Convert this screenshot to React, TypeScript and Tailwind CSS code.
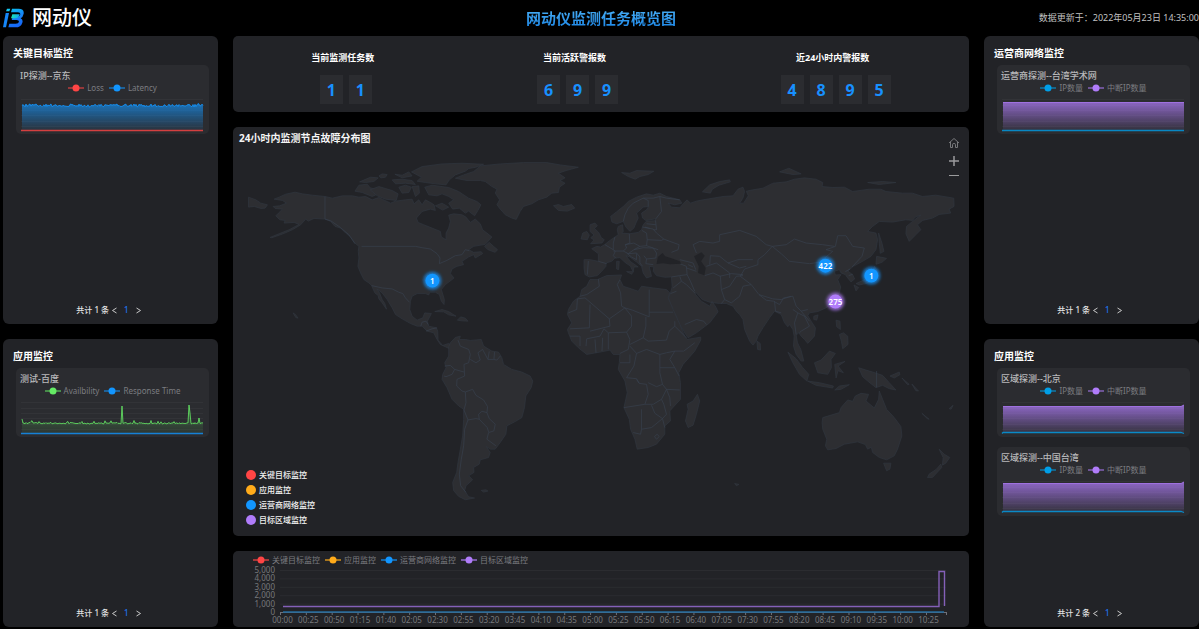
import { useId, type ReactNode } from "react";

const RED = "#ff4545";
const ORANGE = "#ffab1a";
const BLUE = "#1296ff";
const SKY = "#009fe8";
const PURPLE = "#b07cfa";
const GREEN = "#65eb65";

interface Series {
  name: string;
  color: string;
}

interface CardData {
  title: string;
  legend: Series[];
  chart: ReactNode;
}

const MONITORS: Series[] = [
  { name: "关键目标监控", color: RED },
  { name: "应用监控", color: ORANGE },
  { name: "运营商网络监控", color: BLUE },
  { name: "目标区域监控", color: PURPLE },
];

const IP_LEGEND: Series[] = [
  { name: "IP数量", color: SKY },
  { name: "中断IP数量", color: PURPLE },
];

const STATS = [
  { label: "当前监测任务数", value: "11" },
  { label: "当前活跃警报数", value: "699" },
  { label: "近24小时内警报数", value: "4895" },
];

// Land outlines, one drawing unit is a third of a pixel
const AMERICAS = [
  "M115 148L140 152 152 160 132 168 112 170 118 176 140 178 128 190 120 198 132 210 148 212 145 220 175 218 190 224 160 240 130 252 103 263 108 264 140 253 170 240 195 225 210 208 218 214 235 206 268 208 285 215 298 230 315 235 330 250 345 262 358 280 370 290 368 305 370 325 367 350 375 370 385 390 400 400 408 408 418 430 428 438 430 448 440 460 453 479 448 462 440 450 432 430 424 418 440 430 455 450 470 475 480 495 500 508 525 522 545 530 560 530 575 545 595 550 605 570 615 585 630 592 645 599 655 592 640 582 622 588 608 572 607 545 603 535 580 530 576 515 588 492 568 490 562 505 545 512 530 500 523 480 525 455 530 440 545 432 570 432 580 436 583 428 600 428 612 435 618 455 626 465 627 450 618 420 630 405 650 390 656 385 645 372 650 358 665 350 685 345 680 335 700 322 715 315 720 325 742 312 738 306 715 308 700 300 715 290 750 284 770 262 755 250 742 240 735 222 720 208 705 218 692 202 680 195 655 192 640 196 645 215 640 235 632 250 632 270 618 262 615 245 590 235 565 225 548 218 543 205 560 185 585 178 600 182 596 165 585 158 570 150 560 165 550 150 536 162 530 148 510 150 480 154 465 160 440 148 430 143 410 150 390 140 370 142 350 138 320 138 290 145 268 140 230 136 200 132 178 127 150 133 130 142Z",
  "M748 290L762 278 775 290 787 300 780 308 758 300Z",
  "M358 124L370 106 395 103 404 114 420 118 432 130 410 140 380 128Z",
  "M404 120L430 110 450 116 470 122 488 132 482 152 450 148 425 138Z",
  "M528 66L560 50 620 42 680 40 745 43 722 52 700 56 690 64 660 75 642 90 632 105 600 102 570 98 545 94 558 82Z",
  "M568 112L590 106 640 113 670 125 700 145 725 155 737 165 728 182 718 198 700 184 690 190 672 175 652 178 640 160 655 150 640 140 620 132 605 138 580 135Z",
  "M372 96L405 82 428 84 415 95 390 98Z",
  "M430 78L440 72 455 74 450 82 436 84Z",
  "M478 73L500 76 520 66 530 78 500 84Z",
  "M470 90L500 88 530 92 540 104 510 100 480 102Z",
  "M490 112L510 106 528 112 520 128 500 130Z",
  "M530 110L550 108 552 130 540 140Z",
  "M600 168L620 160 640 172 622 181Z",
  "M38 142L60 150 75 160 95 165 88 175 75 176 55 170 38 172Z",
  "M598 486L620 480 640 486 662 500 640 496 625 487Z",
  "M666 512L676 502 690 506 698 515 680 514Z",
  "M172 490L180 496 187 506 180 504Z",
  // south america
  "M640 592L645 580 660 564 675 560 672 570 690 570 705 573 738 570 745 590 770 605 790 608 800 625 805 645 830 660 860 668 885 680 893 695 888 715 872 740 868 775 860 805 840 817 815 830 812 855 795 880 780 900 765 900 753 892 765 910 760 925 735 932 732 945 715 955 716 970 700 980 712 992 692 1010 688 1025 700 1043 718 1047 690 1052 670 1042 655 1025 652 1000 664 970 668 940 675 900 682 860 685 810 685 780 670 770 650 750 635 715 620 690 622 675 632 655 628 640 640 620Z",
  "M738 1024L752 1022 758 1026 745 1029Z",
];

const AMERICAS_BORDERS = [
  "M268 140L268 208 285 213 310 230 340 255 358 282",
  "M378 290L540 290 560 294 585 298 605 312 614 325 612 342 635 332 660 318 680 315 690 300 702 303",
  "M408 408L440 415 470 418 490 428 502 432 510 445 522 458",
  "M556 530L560 518 572 515 578 525M572 545L590 538 605 535",
  "M668 572L675 590 700 600 705 615 700 640 686 645 688 680 665 690 664 710 680 725 690 728 712 720 722 738 745 752 757 772 755 790",
  "M628 650L645 648 658 660 650 675 632 682 626 680M658 660L686 668",
  "M690 728L692 760 686 782 698 812 722 808 732 810 730 795 740 786 755 790 762 808 780 825 776 845 760 850 755 870 782 890M732 810L756 835 760 848",
  "M698 812L688 840 685 890 678 930 672 975 676 1010 692 1030",
  "M705 630L722 640 735 632 728 610 742 600 758 630 775 630 785 632 795 620M762 606L758 630M778 608L776 630",
];

const OLD_WORLD = [
  // greenland, iceland, svalbard
  "M0 48L60 42 130 38 200 38 240 45 295 52 258 62 235 70 255 84 240 92 255 100 238 112 235 128 215 130 200 142 175 150 155 162 130 170 120 185 108 209 95 205 75 195 60 178 50 165 58 150 45 130 50 118 35 110 15 95 0 92 -40 92 -75 85 -50 75 -20 65Z",
  "M220 168L235 164 250 170 275 164 284 175 262 184 235 182Z",
  "M425 68L450 70 470 62 522 64 505 74 480 80 466 88 445 80Z",
  // eurasia
  "M312 330L330 330 355 335 355 312 335 297 350 290 362 292 375 284 390 272 405 262 415 255 412 240 415 230 428 225 430 245 425 250 450 252 475 248 485 240 490 225 500 214 525 213 528 207 498 212 488 205 485 190 500 180 506 170 490 172 470 190 475 205 468 220 462 235 450 245 438 232 430 215 410 222 396 217 392 200 410 186 430 170 445 155 470 142 500 132 520 136 540 130 560 140 600 150 606 160 585 165 565 160 575 172 600 174 612 160 622 150 632 160 650 154 670 150 700 145 730 140 760 138 775 118 790 112 795 125 790 145 780 160 792 160 806 138 800 124 820 120 850 115 880 100 920 96 945 88 975 84 1010 88 1030 98 1028 110 1060 113 1095 112 1120 125 1170 118 1205 118 1220 125 1270 130 1300 130 1330 140 1370 136 1424 145 1425 170 1410 178 1415 190 1380 194 1360 205 1330 212 1315 225 1325 240 1310 255 1290 275 1280 252 1282 230 1300 215 1325 196 1308 202 1300 212 1280 210 1240 217 1200 215 1180 230 1165 245 1190 250 1195 270 1190 300 1175 320 1150 335 1122 350 1105 364 1120 375 1126 388 1115 397 1105 385 1098 375 1085 370 1080 360 1065 365 1068 376 1085 375 1075 390 1084 412 1080 430 1065 455 1040 475 1015 486 990 490 985 498 995 515 1008 535 1005 560 985 582 975 570 965 560 958 550 950 557 954 580 964 600 973 635 965 635 950 615 942 590 944 560 940 540 930 525 925 532 915 520 905 495 885 485 870 505 850 535 835 560 830 575 820 587 810 575 795 540 790 510 780 495 770 485 760 470 740 462 720 462 690 458 668 450 650 430 645 432 665 455 690 470 697 455 710 475 715 487 690 520 650 550 625 565 618 555 600 525 580 480 565 445 572 430 577 412 575 382 555 383 530 378 520 365 522 352 508 350 515 380 500 385 490 370 485 350 470 337 450 322 438 318 452 336 475 352 462 352 460 368 452 350 435 338 420 324 405 325 395 335 378 340 378 350 365 365 352 378 328 382 315 375 312 355Z",
  "M330 225L345 220 352 228 343 236 356 248 364 264 373 270 366 280 332 282 342 271 332 264 342 256 330 245Z",
  "M303 268L308 250 320 245 328 256 322 270Z",
  "M410 335L418 335 416 360 410 358Z",
  "M440 366L458 366 456 374Z",
  "M668 126L690 105 720 95 750 90 752 96 718 106 698 118 692 130Z",
  "M900 66L928 55 965 72 940 74Z",
  "M1165 98L1210 95 1250 98 1200 104Z",
  "M1198 250L1208 280 1214 305 1203 311 1200 280Z",
  "M1192 320L1222 326 1208 338 1190 344Z",
  "M1186 350L1194 366 1184 392 1160 402 1140 406 1130 402 1160 388 1176 370Z",
  "M1124 406L1138 414 1130 424Z",
  "M1070 512L1082 515 1083 540 1072 532Z",
  "M1080 555L1092 550 1105 560 1106 585 1090 598 1086 575Z",
  "M1003 500L1016 496 1012 512 1003 510Z",
  "M1070 470L1076 462 1076 480Z",
  "M832 575L842 582 843 602 834 600Z",
  // africa
  "M330 390L352 390 380 378 425 376 420 390 430 410 455 418 475 425 485 410 520 415 560 420 570 430 565 445 580 480 600 525 615 560 622 570 663 563 663 572 645 605 610 645 597 670 602 700 602 750 570 785 572 815 555 830 555 855 530 885 505 895 472 900 465 870 452 840 448 810 432 775 442 730 435 695 415 660 418 640 420 615 400 615 390 602 360 608 320 615 295 595 275 575 265 550 262 540 275 520 262 495 265 480 280 455 300 440 305 420 320 410Z",
  "M653 735L660 755 650 795 640 828 625 835 617 815 625 780 622 765 640 755Z",
  // islands of the south east
  "M925 608L950 628 970 655 988 675 982 695 960 675 940 640Z",
  "M1005 640L1025 632 1050 605 1068 612 1055 630 1056 655 1045 675 1015 670Z",
  "M984 695L1020 700 1062 710 1060 716 1010 708Z",
  "M1066 645L1097 636 1076 650 1092 670 1076 664 1070 686Z",
  "M1138 655L1160 662 1180 668 1210 678 1230 700 1250 722 1230 718 1210 708 1190 715 1165 695 1150 682Z",
  "M1232 680L1260 668 1262 676 1245 686Z",
  "M1268 686L1290 705 1285 706ZM1298 704L1318 725 1310 724Z",
  "M1066 722L1080 710 1110 706 1085 720Z",
  // australia, tasmania, new zealand
  "M1030 805L1080 790 1085 775 1105 752 1120 756 1128 740 1145 732 1168 735 1160 755 1185 776 1198 750 1200 725 1210 750 1222 780 1245 805 1265 832 1268 860 1255 900 1245 920 1222 932 1200 925 1180 910 1176 894 1165 900 1158 886 1135 878 1095 885 1070 898 1045 902 1038 890 1042 870 1030 840 1028 820Z",
  "M1213 942L1235 942 1232 960 1222 965Z",
  "M1380 900L1395 915 1412 925 1400 942 1390 948 1392 925Z",
  "M1385 945L1388 955 1360 985 1345 985 1350 975 1372 960Z",
  "M1328 792L1350 810 1344 808ZM1410 778L1422 768 1416 780Z",
  "M765 1003L778 1006 770 1010Z",
];

const OLD_WORLD_BORDERS = [
  // europe
  "M325 334L322 375M355 335L380 342M375 285L400 300 406 305 400 318 408 326M405 262L400 280 400 300M400 304L430 304 440 295 436 285 450 280 448 252",
  "M436 285L462 280 480 290 500 288 502 270 500 250 486 242M430 304L445 312 462 300 480 290M445 312L470 310 480 322 480 340 488 350M462 300L490 294 520 295 530 310 528 325 500 328 492 318M500 328L498 342 520 345",
  "M440 310L455 322 470 330 470 312M488 232L520 238 530 250 552 268 545 272 502 270M500 222L528 225M495 232L510 236M527 212L530 240 520 240M552 268L570 275 598 285 595 300 575 308M500 288L520 295 535 300",
  "M430 215L435 195 445 175 460 160 480 150 490 145 505 152 505 170M490 145L520 145 540 140 545 185 528 207",
  "M600 150L560 145 540 140",
  // middle east
  "M575 382L600 378 622 375 620 350 600 342M600 380L605 395 580 415M605 395L620 405 645 430M622 375L632 395 645 425M620 355L650 365M675 378L700 370 722 380 725 420 735 450 725 462M615 525L650 510 672 515 680 525M572 432L590 425",
  "M600 330L640 340 648 360M625 345L640 352",
  // central and east asia
  "M650 310L640 285 660 275 700 280 720 275 720 255 780 242 830 260 860 285 878 290M690 345L692 318 720 320 745 340 775 330 820 330M680 350L710 340 750 370 750 385M745 340L780 355 800 350M720 380L755 372 790 375",
  "M878 290L920 285 945 268 980 280 1030 285 1065 290M878 290L905 312 930 335 990 342 1020 338 1060 305 1040 300 1068 290 1075 258 1100 258 1120 290 1155 295 1148 320 1118 352M878 290L855 315 835 330 835 345 795 358 782 380 815 405 838 435 880 448 905 450 935 440",
  "M725 420L750 410 770 380 790 378M735 450L755 460 780 440 790 410 815 405M838 435L860 452 882 455 900 465 912 445 940 440 950 470 965 485 985 480M885 455L888 485 905 490M940 480L955 490 945 520 950 555M955 490L975 500 990 530 965 545 960 550M965 485L990 515",
  "M1098 366L1112 358M1108 378L1120 374M1192 665L1192 714",
  // africa
  "M355 388L358 410 320 435 300 440M315 445L292 448 290 480 265 490M315 445L388 508 390 530 350 540 330 545M330 465L328 535 270 538M420 390L412 405 422 430 425 470 435 475 388 508M435 475L458 482 508 502 508 420M435 475L455 500 455 530 440 548 385 550 372 538M508 488L580 488M498 502L498 530 490 565 505 575 560 572 568 545 585 530 585 515M585 530L620 565",
  "M440 548L450 570 445 600 420 612M450 585L490 565M450 590L470 612 500 600 540 615 560 610 585 605 612 605 645 580M385 550L385 600M368 565L366 605M345 570L348 610M372 538L360 560 320 568 318 590M270 560L300 560 300 590",
  "M420 640L450 640 450 615M470 612L462 650 440 685 470 688 478 702 500 705 505 735 495 765 432 775M478 702L470 690M540 615L540 670 548 705 530 712 505 700M540 655L585 655 598 680M585 605L570 630 585 655M548 705L560 720 600 722M560 720L545 750 520 765 495 765M545 750L552 765 560 795 548 808 525 792 515 768M485 780L485 840 515 835 548 808M460 850L482 855 485 840M548 808L555 835M560 720L570 745 572 770",
  "M524 862L532 855 538 862 530 870Z",
];

const SEAS = [
  "M530 343L534 322 548 310 556 320 575 326 600 335 604 342 570 344 550 341Z",
  "M643 320L665 308 675 318 664 335 678 355 674 377 655 370 657 350Z",
];

const PINS = [
  { x: 199, y: 154, value: "1", color: BLUE },
  { x: 593, y: 139, value: "422", color: BLUE },
  { x: 639, y: 149, value: "1", color: BLUE },
  { x: 603, y: 175, value: "275", color: PURPLE },
];

function Shapes({ list, land = false }: { list: string[]; land?: boolean }) {
  return (
    <>
      {list.map((d) => (
        <path key={d} d={d} fill={land ? "#2d2e32" : "none"} stroke={land ? "#303640" : "#38414e"} strokeWidth="2" strokeLinejoin="round" />
      ))}
    </>
  );
}

function WorldMap() {
  return (
    <svg viewBox="0 0 736 410" className="block h-full w-full" role="img" aria-label="世界地图">
      <defs>
        <filter id="glow" x="-50%" y="-50%" width="200%" height="200%">
          <feGaussianBlur stdDeviation="1.5" />
        </filter>
      </defs>
      <g transform="translate(2 23) scale(0.3333)">
        <Shapes list={AMERICAS} land />
        <Shapes list={AMERICAS_BORDERS} />
      </g>
      <g transform="translate(247 23) scale(0.3333)">
        <Shapes list={OLD_WORLD} land />
        <Shapes list={OLD_WORLD_BORDERS} />
        {SEAS.map((d) => (
          <path key={d} d={d} fill="#222327" />
        ))}
      </g>
      {PINS.map((pin) => (
        <g key={`${pin.x}-${pin.y}`}>
          <circle cx={pin.x} cy={pin.y} r="9" fill={pin.color} opacity="0.7" filter="url(#glow)" />
          <circle cx={pin.x} cy={pin.y} r="7" fill={pin.color} />
          <text x={pin.x} y={pin.y + 3} textAnchor="middle" className="fill-white text-[8px] font-semibold">
            {pin.value}
          </text>
        </g>
      ))}
    </svg>
  );
}

function Legend({ items }: { items: Series[] }) {
  return (
    <ul className="flex gap-[5px] text-[8px] leading-[10px] text-[#7b7c80]">
      {items.map((item) => (
        <li key={item.name} className="flex items-center gap-[3px] whitespace-nowrap">
          <svg width="16" height="8" viewBox="0 0 16 8" aria-hidden="true">
            <path d="M0 4H16" stroke={item.color} strokeWidth="1.2" />
            <circle cx="8" cy="4" r="3.5" fill={item.color} />
          </svg>
          {item.name}
        </li>
      ))}
    </ul>
  );
}

interface AreaChartProps {
  points: string;
  color: string;
  fillFrom: number;
  top: number;
  base: string;
  baseColor: string;
}

function AreaChart({ points, color, fillFrom, top, base, baseColor }: AreaChartProps) {
  const id = useId();
  return (
    <svg viewBox="0 0 193 38" className="block w-full" aria-hidden="true">
      <defs>
        <linearGradient id={id} x1="0" x2="0" y1={top} y2="35" gradientUnits="userSpaceOnUse">
          <stop offset="0" stopColor={color} stopOpacity={fillFrom} />
          <stop offset="1" stopColor={color} stopOpacity="0.04" />
        </linearGradient>
      </defs>
      {[3, 9, 14, 19, 25, 30].map((y) => (
        <path key={y} d={`M5 ${y}.5H187`} stroke="#323337" />
      ))}
      <polygon points={`6,34 ${points} 187,34`} fill={`url(#${id})`} />
      <polyline points={points} fill="none" stroke={color} strokeOpacity="0.8" />
      <polyline points={base} fill="none" stroke={baseColor} strokeOpacity="0.8" strokeWidth="1.3" />
    </svg>
  );
}

// Small repeatable jitter, so that the curve looks the same on each render
const jitter = (i: number) => {
  const n = Math.sin(i * 127.1 + 11.7) * 43758.5453;
  return n - Math.floor(n);
};

const latencyPoints = Array.from({ length: 182 }, (_, i) => {
  const spike = jitter(i + 500) > 0.96 ? 2 : 0;
  return `${6 + i},${(11 - jitter(i) * 3 - spike).toFixed(1)}`;
}).join(" ");

const availabilityPoints = Array.from({ length: 182 }, (_, i) => {
  let y = 25 - jitter(i) * 1.5 - (jitter(i + 300) > 0.93 ? 2 : 0);
  if (i === 0) y = 20;
  if (i === 100) y = 7;
  if (i === 167) y = 6;
  if (i === 168) y = 14;
  if (i === 177) y = 19;
  return `${6 + i},${y.toFixed(1)}`;
}).join(" ");

const JD: CardData = {
  title: "IP探测--京东",
  legend: [
    { name: "Loss", color: RED },
    { name: "Latency", color: BLUE },
  ],
  chart: <AreaChart points={latencyPoints} color={BLUE} fillFrom={0.65} top={8} base="5,34.5 187,34.5" baseColor={RED} />,
};

const BAIDU: CardData = {
  title: "测试-百度",
  legend: [
    { name: "Availbility", color: GREEN },
    { name: "Response Time", color: BLUE },
  ],
  chart: <AreaChart points={availabilityPoints} color={GREEN} fillFrom={0.3} top={8} base="5,34.5 187,34.5" baseColor={BLUE} />,
};

const TANET: CardData = {
  title: "运营商探测--台湾学术网",
  legend: IP_LEGEND,
  chart: <AreaChart points="6,6.5 187,6.5" color={PURPLE} fillFrom={0.75} top={5} base="5,34.5 187,34.5" baseColor={SKY} />,
};

const BEIJING: CardData = {
  title: "区域探测--北京",
  legend: IP_LEGEND,
  chart: <AreaChart points="6,7.5 184,7.5 187,6" color={PURPLE} fillFrom={0.75} top={6} base="5,34.5 6,33.5 184,33.5 187,34.5" baseColor={SKY} />,
};

const TAIWAN: CardData = {
  title: "区域探测--中国台湾",
  legend: IP_LEGEND,
  chart: <AreaChart points="6,5.5 184,5.5 187,4" color={PURPLE} fillFrom={0.75} top={4} base="5,34.5 6,33.5 184,33.5 187,34.5" baseColor={SKY} />,
};

function MonitorCard({ card }: { card: CardData }) {
  return (
    <article className="overflow-hidden rounded-[5px] bg-[#2b2c30] pt-1">
      <h3 className="px-1 text-[9px] leading-[14px] font-medium text-[#b9b9bb]">{card.title}</h3>
      <div className="flex justify-center">
        <Legend items={card.legend} />
      </div>
      <div className="pt-[3px]">{card.chart}</div>
    </article>
  );
}

function Pager({ total }: { total: number }) {
  return (
    <nav aria-label="分页" className="mt-auto flex items-center justify-center gap-[3px] pr-1 text-[8px] leading-3 font-medium text-[#e3e3e4]">
      <span>共计 {total} 条</span>
      <button type="button" aria-label="上一页">
        <svg width="5" height="8" viewBox="0 0 5 8" fill="none" stroke="#c8c8c8">
          <path d="M4.5 2L.5 4.5 4.5 7" />
        </svg>
      </button>
      <button type="button" aria-current="page" className="px-1 text-[#1f74ee]">
        1
      </button>
      <button type="button" aria-label="下一页">
        <svg width="5" height="8" viewBox="0 0 5 8" fill="none" stroke="#c8c8c8">
          <path d="M.5 2L4.5 4.5.5 7" />
        </svg>
      </button>
    </nav>
  );
}

function MonitorPanel({ title, cards }: { title: string; cards: CardData[] }) {
  return (
    <section className="flex flex-1 flex-col rounded-md bg-[#222327] pt-[9px] pb-2">
      <h2 className="pl-[10px] text-[10px] leading-4 font-bold text-white">{title}</h2>
      <div className="flex flex-col gap-[10px] pt-1 pr-[9px] pl-[13px]">
        {cards.map((card) => (
          <MonitorCard key={card.title} card={card} />
        ))}
      </div>
      <Pager total={cards.length} />
    </section>
  );
}

function StatsPanel() {
  return (
    <section className="flex justify-around rounded-[5px] bg-[#222327] pt-[15px] pb-2">
      {STATS.map((stat) => (
        <div key={stat.label} className="flex flex-col items-center gap-[10px]">
          <h2 className="text-[9px] leading-[14px] font-bold text-white">{stat.label}</h2>
          <div className="flex">
            {stat.value.split("").map((digit, i) => (
              <span key={i} className="ml-[6px] flex h-[29px] w-[23px] items-center justify-center bg-[#2b2c30] text-base font-bold text-[#1890ff]">
                {digit}
              </span>
            ))}
          </div>
        </div>
      ))}
    </section>
  );
}

function MapPanel() {
  return (
    <section className="relative min-h-0 flex-1 rounded-[5px] bg-[#222327]">
      <WorldMap />
      <h2 className="absolute top-1 left-[6px] text-[10px] leading-[14px] font-bold text-[#f4f4f4]">24小时内监测节点故障分布图</h2>
      <div className="absolute top-[10px] right-[9px] flex flex-col gap-[6px] text-[#9b9b9d]">
        <button type="button" aria-label="还原">
          <svg width="12" height="12" viewBox="0 0 12 12" fill="none" stroke="#77787b">
            <path d="M1 6L6 1.5 11 6M2.5 5V10.5H4.5V7.5Q4.5 6.5 6 6.5T7.5 7.5V10.5H9.5V5" strokeLinejoin="round" />
          </svg>
        </button>
        <button type="button" aria-label="放大">
          <svg width="12" height="12" viewBox="0 0 12 12" stroke="currentColor" strokeWidth="1.5">
            <path d="M1 6H11M6 1V11" />
          </svg>
        </button>
        <button type="button" aria-label="缩小">
          <svg width="12" height="10" viewBox="0 0 12 10" stroke="currentColor">
            <path d="M1 2.5H11" />
          </svg>
        </button>
      </div>
      <ul className="absolute bottom-[9px] left-[13px] flex flex-col text-[8px] font-medium text-[#f0f0f0]">
        {MONITORS.map((item) => (
          <li key={item.name} className="flex h-[15px] items-center gap-[3px]">
            <svg width="10" height="10" viewBox="0 0 10 10" aria-hidden="true">
              <circle cx="5" cy="5" r="5" fill={item.color} />
            </svg>
            {item.name}
          </li>
        ))}
      </ul>
    </section>
  );
}

const TIMES = Array.from({ length: 26 }, (_, i) => {
  const minutes = i * 25;
  return `${String(Math.floor(minutes / 60)).padStart(2, "0")}:${String(minutes % 60).padStart(2, "0")}`;
});

function TrendPanel() {
  return (
    <section className="rounded-[5px] bg-[#222327] pt-1">
      <div className="pl-5">
        <Legend items={MONITORS} />
      </div>
      <svg viewBox="0 -1 736 62" className="block w-full overflow-visible fill-[#77787b] text-[8px]" role="img" aria-label="警报趋势">
        {["5,000", "4,000", "3,000", "2,000", "1,000", "0"].map((label, i) => (
          <g key={label}>
            <path d={`M47 ${4.5 + i * 8.4}H713`} stroke="#2b2c30" />
            <text x="42" y={7 + i * 8.4} textAnchor="end">
              {label}
            </text>
          </g>
        ))}
        <path d="M47 46.5H714" stroke="#6e7079" />
        {TIMES.map((time, i) => (
          <g key={time}>
            <path d={`M${47.5 + i * 25.84} 46V49`} stroke="#6e7079" />
            <text x={49.5 + i * 25.84} y="57" textAnchor="middle">
              {time}
            </text>
          </g>
        ))}
        <path d="M713.5 46V49" stroke="#6e7079" />
        <path d="M50 46H711" stroke="#256d9f" strokeWidth="1.5" />
        <path d="M50 40.5H706V5.5H711.5V40" fill="none" stroke="#8460b8" strokeWidth="1.4" />
      </svg>
    </section>
  );
}

function Logo() {
  return (
    <div className="flex items-center gap-2">
      <svg width="21" height="20" viewBox="0 0 63 60" aria-hidden="true">
        <defs>
          <linearGradient id="logo-b" x1="0" x2="0.3" y1="0" y2="1">
            <stop offset="0" stopColor="#08c5ee" />
            <stop offset="0.45" stopColor="#1689f5" />
            <stop offset="1" stopColor="#1768f6" />
          </linearGradient>
          <linearGradient id="logo-mid" x1="0" x2="1">
            <stop offset="0" stopColor="#18e5b4" />
            <stop offset="1" stopColor="#12a6ee" />
          </linearGradient>
        </defs>
        <path d="M12 2H22L19 10H9Z" fill="#13c8f2" />
        <path d="M8 15H18L9 58H0Z" fill="#1686f8" />
        <path d="M27 2H47Q64 2 62 17Q60 27 53 31Q61 35 58 44Q54 58 37 58H16L19 47H38Q47 47 48 41Q48 36 41 36H26L29 27H42Q51 26 52 18Q52 13 45 13H24Z" fill="url(#logo-b)" />
        <path d="M28 19H50Q48 31 36 31H24Z" fill="url(#logo-mid)" />
      </svg>
      <span className="text-xl leading-6 font-medium text-white">网动仪</span>
    </div>
  );
}

export default function App() {
  return (
    <div className="flex h-screen min-h-[600px] flex-col bg-black pb-[2px] pl-[3px] font-['Noto_Sans','Noto_Sans_CJK_SC',sans-serif]">
      <header className="grid h-9 shrink-0 grid-cols-3 items-center">
        <Logo />
        <h1 className="bg-gradient-to-b from-[#4eb4f6] to-[#1683e6] bg-clip-text text-center text-[15px] leading-6 font-bold text-transparent">网动仪监测任务概览图</h1>
        <p className="text-right text-[9px] text-[#c2c2c2]">数据更新于：2022年05月23日 14:35:00</p>
      </header>
      <main className="grid min-h-0 flex-1 grid-cols-[215fr_736fr_215fr] gap-[15px]">
        <div className="flex min-w-0 flex-col gap-[15px]">
          <MonitorPanel title="关键目标监控" cards={[JD]} />
          <MonitorPanel title="应用监控" cards={[BAIDU]} />
        </div>
        <div className="flex min-h-0 min-w-0 flex-col gap-[15px]">
          <StatsPanel />
          <MapPanel />
          <TrendPanel />
        </div>
        <div className="flex min-w-0 flex-col gap-[15px]">
          <MonitorPanel title="运营商网络监控" cards={[TANET]} />
          <MonitorPanel title="应用监控" cards={[BEIJING, TAIWAN]} />
        </div>
      </main>
    </div>
  );
}
